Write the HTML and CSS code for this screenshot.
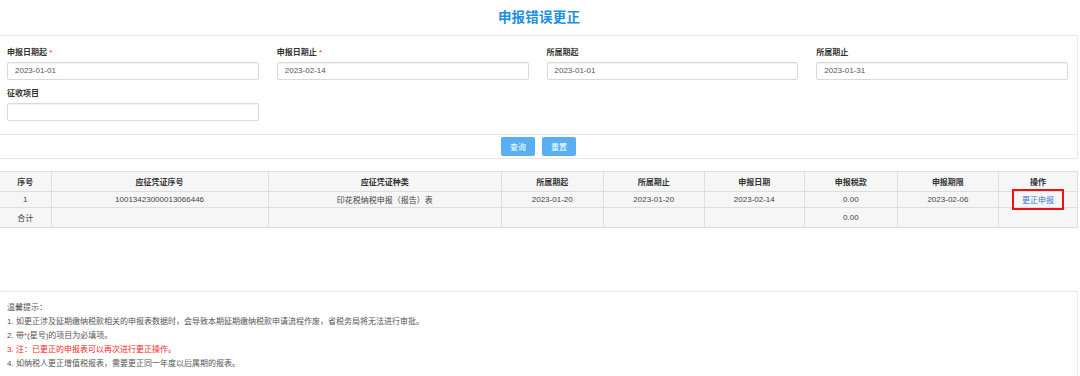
FILE: index.html
```html
<!DOCTYPE html>
<html lang="zh">
<head>
<meta charset="utf-8">
<title>申报错误更正</title>
<link rel="stylesheet" href="styles.css">
</head>
<body>
<div class="page">
  <div class="title">申报错误更正</div>
  <div class="panel query">
    <div class="form-grid">
      <div class="field">
        <div class="label">申报日期起 <span class="req">*</span></div>
        <div class="input">2023-01-01</div>
      </div>
      <div class="field">
        <div class="label">申报日期止 <span class="req">*</span></div>
        <div class="input">2023-02-14</div>
      </div>
      <div class="field">
        <div class="label">所属期起</div>
        <div class="input">2023-01-01</div>
      </div>
      <div class="field">
        <div class="label">所属期止</div>
        <div class="input">2023-01-31</div>
      </div>
      <div class="field">
        <div class="label">征收项目</div>
        <div class="input"></div>
      </div>
    </div>
    <div class="actions">
      <button class="btn">查询</button>
      <button class="btn">重置</button>
    </div>
  </div>

  <table class="grid">
    <colgroup>
      <col style="width:51px"><col style="width:217px"><col style="width:233px"><col style="width:102px"><col style="width:101px"><col style="width:100px"><col style="width:93px"><col style="width:101px"><col style="width:79px">
    </colgroup>
    <thead>
      <tr class="head">
        <th>序号</th><th>应征凭证序号</th><th>应征凭证种类</th><th>所属期起</th><th>所属期止</th><th>申报日期</th><th>申报税款</th><th>申报期限</th><th>操作</th>
      </tr>
    </thead>
    <tbody>
      <tr class="row1">
        <td>1</td><td>10013423000013066446</td><td>印花税纳税申报（报告）表</td><td>2023-01-20</td><td>2023-01-20</td><td>2023-02-14</td><td>0.00</td><td>2023-02-06</td>
        <td class="op"><a class="link">更正申报</a><span class="mark"></span></td>
      </tr>
      <tr class="row2">
        <td>合计</td><td></td><td></td><td></td><td></td><td></td><td>0.00</td><td></td><td></td>
      </tr>
    </tbody>
  </table>

  <div class="panel tips">
    <p>温馨提示：</p>
    <p>1. 如更正涉及延期缴纳税款相关的申报表数据时，会导致本期延期缴纳税款申请流程作废，省税务局将无法进行审批。</p>
    <p>2. 带<span class="req">*</span>(星号)的项目为必填项。</p>
    <p class="red">3. 注：已更正的申报表可以再次进行更正操作。</p>
    <p>4. 如纳税人更正增值税报表，需要更正同一年度以后属期的报表。</p>
  </div>
</div>
</body>
</html>
```

FILE: styles.css
```css
* { box-sizing: border-box; }
html, body { margin: 0; padding: 0; background: #fff; }
body {
  font-family: "Liberation Sans", "Noto Sans CJK SC", sans-serif;
  font-size: 8px;
  color: #333;
  width: 1080px;
  height: 376px;
  overflow: hidden;
}
.page { width: 1078px; }
.title {
  height: 35px;
  line-height: 35px;
  text-align: center;
  font-size: 13.5px;
  font-weight: bold;
  color: #1d8fe1;
  letter-spacing: 0.2px;
}
.panel {
  border: 1px solid #e8e8e8;
  border-left: none;
  border-radius: 0 3px 3px 0;
  width: 1078px;
  background: #fff;
}
.query { box-shadow: 0 0 2px rgba(0,0,0,0.04); }
.form-grid {
  display: grid;
  grid-template-columns: repeat(4, 1fr);
  column-gap: 18px;
  row-gap: 8px;
  padding: 11px 9px 13px 7px;
  border-bottom: 1px solid #e6e6e6;
}
.label {
  font-weight: bold;
  line-height: 12px;
  height: 12px;
  margin-bottom: 3px;
  color: #333;
}
.req { color: #f33; font-weight: normal; }
.input {
  height: 18px;
  border: 1px solid #d9d9d9;
  border-radius: 2px;
  box-shadow: inset 0 1px 1px rgba(0,0,0,0.05);
  padding-left: 7px;
  line-height: 16px;
  color: #555;
}
.actions {
  display: flex;
  justify-content: center;
  gap: 7px;
  padding: 2px 0 2px;
}
.btn {
  width: 34px;
  height: 19px;
  border: none;
  border-radius: 2px;
  background: #5aaff2;
  color: #fff;
  font-family: inherit;
  font-size: 8px;
  padding: 0;
}
.grid {
  margin-top: 12px;
  width: 1078px;
  border-collapse: collapse;
  table-layout: fixed;
  background: #f6f6f6;
}
.grid th, .grid td {
  border: 1px solid #dedede;
  text-align: center;
  padding: 0;
  color: #444;
  font-size: 8px;
}
.grid th { font-weight: bold; color: #333; }
.grid th:first-child, .grid td:first-child { border-left: none; }
.head { height: 20px; }
.row1 { height: 16px; }
.row2 { height: 20px; }
.op { position: relative; }
.link { color: #3878d0; }
.mark {
  position: absolute;
  left: 13px;
  top: -3px;
  width: 52px;
  height: 21px;
  border: 2px solid #ee1111;
}
.tips {
  margin-top: 63px;
  padding: 9px 7px 0;
  height: 90px;
  box-shadow: 0 -1px 2px rgba(0,0,0,0.04);
}
.tips p {
  margin: 0;
  line-height: 14px;
  color: #555;
}
.tips p.red { color: #f22; }
```
